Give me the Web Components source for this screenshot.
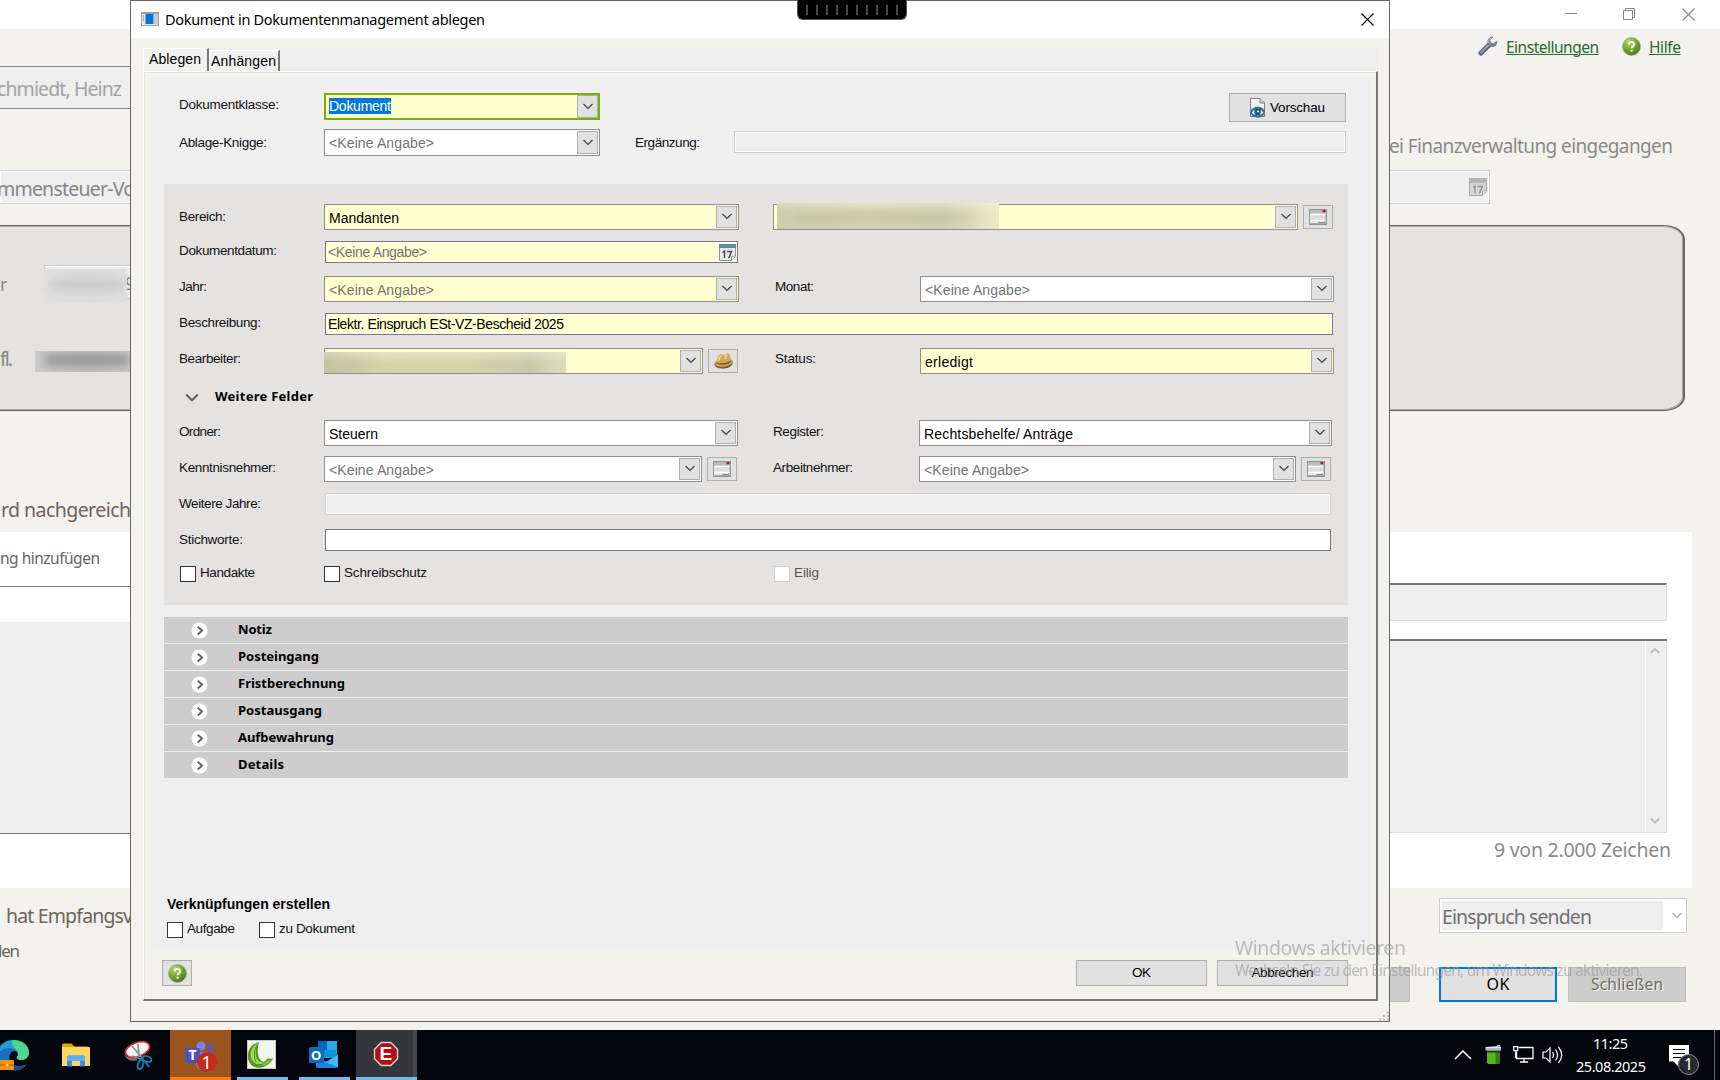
<!DOCTYPE html>
<html lang="de">
<head>
<meta charset="utf-8">
<title>Dokument in Dokumentenmanagement ablegen</title>
<style>
html,body{margin:0;width:1720px;height:1080px;overflow:hidden;background:#f3f2ee}
</style>
</head>
<body>
<desktop-screen></desktop-screen>
<script>
const define = (name, css, html, ready) => customElements.define(name, class extends HTMLElement {
  constructor() {
    super();
    this.attachShadow({mode: 'open'}).innerHTML = `<style>:host{display:block;box-sizing:border-box}${css}</style>` + (typeof html === 'function' ? html(this) : html);
  }
  connectedCallback() { if (ready) ready(this); }
});

/* ---------- icons ---------- */
const svg = (w, h, body, vb) => `<svg width="${w}" height="${h}" viewBox="${vb || `0 0 ${w} ${h}`}" style="display:block">${body}</svg>`;
const ICONS = {
  app: svg(18, 14, '<rect width="18" height="14" fill="#9aa0a6"/><rect x="1" y="2" width="16" height="11" fill="#e4e6e8"/><rect x="4.500" y="2" width="8" height="10" fill="#0078d7"/><path d="M2 4h1M2 6h1M2 8h1" stroke="#777"/><rect x="13" y="2" width="4" height="10" fill="#c9cbcd"/>'),
  close: svg(13, 13, '<path d="M.5.500l12 12M12.500.500l-12 12" stroke="#000" stroke-width="1.100"/>'),
  closeGray: svg(13, 13, '<path d="M.5.500l12 12M12.500.500l-12 12" stroke="#8a8a8a" stroke-width="1.100"/>'),
  min: svg(13, 2, '<path d="M0 .5h12" stroke="#8a8a8a"/>'),
  restore: svg(13, 13, '<path d="M.5 2.500h9v9h-9zM2.500 2.500v-2h9v9h-2" fill="none" stroke="#8a8a8a"/>'),
  wrench: svg(20, 20, '<path d="M3 17L11 9" stroke="#59617a" stroke-width="5" stroke-linecap="round"/><path d="M3 16.500L11 8.500" stroke="#9aa2b8" stroke-width="2.200" stroke-linecap="round"/><path d="M15.500.8c-3-.6-6 1.600-6 5 0 3.300 2.400 5.200 5 5.200 2.800 0 4.800-2.200 4.800-5l-.6-1.200-3.400 2.600-2.500-.8-.5-2.400z" fill="#767e96"/><path d="M13 2.200c-2 .9-2.800 3-2.200 5" fill="none" stroke="#b3bacb"/>'),
  help: svg(19, 19, '<defs><radialGradient id="g" cx=".35" cy=".25" r=".8"><stop offset="0" stop-color="#b5dd6b"/><stop offset=".5" stop-color="#74ac2e"/><stop offset="1" stop-color="#47761a"/></radialGradient></defs><circle cx="9.500" cy="9.500" r="9" fill="url(#g)" stroke="#9aa68b" stroke-width=".7"/><path d="M6.900 7.400c.2-3.300 5.600-3 5.300 0-.2 1.800-2.500 1.900-2.600 3.900" fill="none" stroke="#fff" stroke-width="1.900"/><rect x="8.600" y="12.700" width="2" height="2" fill="#fff"/>'),
  cal: svg(17, 17, '<path d="M.5.500h16v12l-4 4h-12z" fill="#e9ebec" stroke="#8b9298"/><rect width="17" height="4" fill="#5d8aa8"/><path d="M16.500 12l-4 .5v4" fill="#fff" stroke="#8b9298"/><path d="M3.500 8.500l2-1.500v7M8 7.600h4.500L9.800 14" fill="none" stroke="#4b4b40" stroke-width="1.500"/>'),
  calGray: svg(18, 18, '<path d="M.5.500h17v13l-4 4h-13z" fill="#d7d7d7" stroke="#a8a8a8"/><rect width="18" height="5" fill="#b4b4b4"/><path d="M17.500 12.500l-4 .5v4.500" fill="#eee" stroke="#a8a8a8"/><path d="M4 9.500l2-1.500v7.500M8.500 8.600h4.800l-3 7" fill="none" stroke="#979797" stroke-width="1.500"/>'),
  card: svg(18, 16, '<rect x=".5" y=".5" width="17" height="15" fill="#e9e9e9" stroke="#8e9292"/><rect x="1" y="1" width="16" height="3.500" fill="#b9bcbc"/><rect x="13.500" y="1" width="3" height="2.300" fill="#c8102e"/><rect x="2" y="6.500" width="14" height="3.500" fill="#dcdcdc"/><path d="M1 5.500h16M1.500 11.500h15" stroke="#fff"/><path d="M9.500 13.500h6v-1" stroke="#858989" fill="none"/><path d="M1.500 14.600h15.500v-10" stroke="#a0a4a4" fill="none"/>'),
  hat: svg(19, 16, '<path d="M.3 11c.2 5.500 15.400 7 18.300-.5.500-2-.6-3-2-2.700L2 9z" fill="#7c5823"/><path d="M.3 10.700c.2-2 2-3 3.200-3.200L16 6.500c2-.2 3.200.7 2.600 2.700-2.400 5-15 7.200-18.300 1.500z" fill="#c99d52"/><path d="M2.800 10C2.600 6 4.300 1.300 7 .9c1.300-.2 2 1.300 3 1S12.300-.2 14 .2c2.200.8 2.700 5 3 8C14.500 11.500 6.500 12.500 2.800 10z" fill="#cfa65b"/><path d="M2.800 9.400c3 2 10.600 1 14.100-2v1.300c-3.200 3-10.700 3.800-14.100 1.600z" fill="#6d4a1a"/><path d="M7.200 2.300C5.400 4 4.900 5.700 4.800 7.800M13 1.700c-1.600.8-2 2.500-1.700 4.500" fill="none" stroke="#f0d79b" stroke-width="1.800"/>'),
  preview: svg(15, 20, '<path d="M.5.500h9.500l4.500 4.500v13.500H.5z" fill="#f4f4f4" stroke="#7d7d7d"/><path d="M10 .5V5h4.500" fill="#c9c9c9" stroke="#8a8a8a"/><path d="M.3 14C1.500 7.500 13.500 6.500 14.900 14c-1 7.500-13.600 7.500-14.600 0z" fill="#2f7396"/><path d="M2 14.500c1.500-3.700 9.500-4.200 11.300 0-2 3.700-9.500 3.700-11.300 0z" fill="#e6f3f9"/><circle cx="7.600" cy="14" r="3.200" fill="#17567c"/><circle cx="8" cy="13.500" r="1.100" fill="#fff"/>'),
  chev: svg(10, 7, '<path d="M.5 1L5 5.500 9.500 1" fill="none" stroke="#3c3c3c" stroke-width="1.100"/>'),
  chevGray: svg(10, 7, '<path d="M.5 1L5 5.500 9.500 1" fill="none" stroke="#a5a5a5" stroke-width="1.100"/>'),
  chevBold: svg(14, 9, '<path d="M1.200 1.500L7 7.200l5.800-5.700" fill="none" stroke="#666" stroke-width="2.200"/>'),
  sbUp: svg(10, 8, '<path d="M.8 6L5 2l4.200 4" fill="none" stroke="#c0c0c0" stroke-width="2"/>'),
  sbDown: svg(10, 8, '<path d="M.8 1.500L5 5.500l4.200-4" fill="none" stroke="#c0c0c0" stroke-width="2"/>'),
  expand: svg(17, 17, '<circle cx="8.500" cy="8.500" r="8" fill="#fff"/><path d="M6.800 4.800l4.200 3.800-4.200 3.800" fill="none" stroke="#666" stroke-width="2"/>'),
  grip: svg(10, 10, '<path d="M8 1.500h2M4 5h2M8 5h2M0 8.500h2M4 8.500h2M8 8.500h2" stroke="#b8b8b8" stroke-width="2"/>'),
  edge: svg(32, 32, '<path d="M-1 14C1 5 8 1 15.500 1 25 1 31 7 31 13.500c0 5-4 7.500-8 7.500-3 0-5-1.500-4-3 2-3 .5-7-4.500-7.500C8 10 3 11-1 14z" fill="#1f9fd6"/><path d="M15 1c10 0 16 6 16 12.500 0 5-4 7.500-8 7.500-3 0-5-1.500-4-3 2-3 1-6-1-7.500C14 6 12 3 15 1z" fill="#4fd68f"/><path d="M-1 17C3 7 15 7 19.500 13c-5-3-9 2-8 7 1 7 10 9 17 5-3 5-8 6.500-12 6.500C8 31.500-1 25-1 17z" fill="#1a6fc4"/><path d="M11.500 20c1 7 10 9 17 5-4 5-9 6.500-14 6z" fill="#124d91"/><rect y="21" width="16" height="10" rx="1" fill="#f0950c"/><path d="M0 26h16" stroke="#a65c00"/><circle cx="9" cy="26" r="1.500" fill="#ffd04d"/>'),
  folder: svg(28, 24, '<path d="M0 2q0-1.500 1.500-1.500h8l3 3H25q2 0 2 2V22q0 1-1 1H0z" fill="#e8a200"/><rect y="4" width="28" height="19" rx="1" fill="#ffd562"/><path d="M5 23.500V14q0-1.500 1.500-1.500h15Q23 12.500 23 14v9.500h-5V18h-8v5.500z" fill="#3d8fe0"/><path d="M5 18V14q0-1.500 1.500-1.500h15Q23 12.500 23 14v4" fill="#62aef0"/>'),
  snip: svg(28, 30, '<path d="M.5 14q5 4 10 1l3 4q-9 3-13-5z" fill="#777"/><ellipse cx="13.500" cy="8.500" rx="12.500" ry="7" fill="#f4f4f4" stroke="#d22b2b" stroke-width="1.600" transform="rotate(-20 13.500 8.500)"/><path d="M8 5l11 13M14 3l1 13" stroke="#909090" stroke-width="1.800"/><path d="M17 18l-9-3" stroke="#888" stroke-width="1.800"/><ellipse cx="23" cy="18" rx="4.500" ry="2.700" fill="none" stroke="#1677b8" stroke-width="2" transform="rotate(15 23 18)"/><ellipse cx="16.500" cy="23.500" rx="2.500" ry="4.800" fill="none" stroke="#1677b8" stroke-width="2" transform="rotate(18 16.500 23.500)"/><path d="M21 20l4 6" stroke="#1677b8" stroke-width="2"/>'),
  teams: svg(34, 32, '<circle cx="16" cy="5" r="4.500" fill="#7b83eb"/><circle cx="25" cy="6" r="3.200" fill="#5059c9"/><path d="M11 11h13v11a6.500 7 0 0 1-13 0z" fill="#7b83eb"/><path d="M22 11h7v8a5 5 0 0 1-7 4z" fill="#5059c9"/><rect x="0" y="7" width="15" height="15" rx="1.500" fill="#4b53bc"/><circle cx="22" cy="21" r="10" fill="#c42b1c"/>'),
  swoosh: svg(29, 29, '<rect width="29" height="29" fill="#f3f3f0"/><path d="M.5 29V.5H29M28.500 0v28.500H0" fill="none" stroke="#c9c9c9"/><path d="M12 2C4 4 0 11 1 18c1 6 5 10 11 9.800 7-.2 12-5 14-9.800-2 1-4 1-6 .5-1 3-3.500 4-5.500 2.500C11 18 9.500 12 12 2z" fill="#4e951e"/><path d="M11 3C5 6 2.500 12 4 18c1.500 5.500 8 8 14 4.500-5 .5-8-2-9-6.500-.9-4.500 0-9 2-13z" fill="#a4d750"/><path d="M19.500 20c2 .5 4 .3 5.500-.7-2.500 4-7 7-12 7 3-1 5.500-3 6.500-6.300z" fill="#86c43a"/><path d="M10 5C7 10 6.500 17 9 22" fill="none" stroke="#3f7f18" stroke-width=".8"/>'),
  outlook: svg(30, 28, '<rect x="9" y="0" width="19" height="17" fill="#1490df"/><path d="M18 0h10v9H18z" fill="#28a8ea"/><path d="M9 0h9v9H9z" fill="#0364b8"/><path d="M7 14l11 7 11-8v12q0 2-2 2H9q-2 0-2-2z" fill="#1a86d9"/><path d="M29 14v12L16 21z" fill="#50d0ff" opacity=".7"/><rect y="6" width="15" height="16" rx="1.500" fill="#0f6cbd"/>'),
  octagon: svg(26, 26, '<path d="M8 .800h10L25.200 8v10L18 25.200H8L.800 18V8z" fill="#d5d5d5"/><path d="M8.500 2.200h9L23.800 8.500v9l-6.300 6.300h-9L2.200 17.500v-9z" fill="#b50d16"/>'),
  up: svg(18, 10, '<path d="M1 9l8-8 8 8" fill="none" stroke="#fff" stroke-width="1.500"/>'),
  battery: svg(17, 20, '<path d="M2 4h13v14l-1.500 1h-10L2 18z" fill="#57b51d"/><path d="M10.500 7H15v11l-1.500 1h-3z" fill="#2e8313"/><path d="M2 5.500h13v2H2z" fill="#1f3c12"/><path d="M.5 2L12 1l.5-1H15v1l1 1v3.500H.5z" fill="#b4bac8"/><path d="M1 2.500h14" stroke="#e3e6ee"/>'),
  net: svg(21, 17, '<path d="M5.500 1.500h14.500v11H3.500V6M11 12.500V16M7 16h8" fill="none" stroke="#fff" stroke-width="1.300"/><path d="M.7.700h4v4h-4zM2.700 5v7" fill="none" stroke="#fff" stroke-width="1.200"/>'),
  sound: svg(21, 18, '<path d="M1 6h3l4-4v14l-4-4H1z" fill="none" stroke="#fff" stroke-width="1.200"/><path d="M10.500 6q2 3 0 6M13.500 3.500q4 5.500 0 11M16.500 1q6.500 8 0 16" fill="none" stroke="#fff" stroke-width="1.200"/>'),
  note: svg(32, 32, '<path d="M0 0h20v16.500H9V21l-4.500-4.500H0z" fill="#fff"/><path d="M4 4.500h12M4 8.500h12M4 12.500h9" stroke="#000" stroke-width="1.200"/><circle cx="19.500" cy="19.500" r="10" fill="#28292c" stroke="#8d8d8d"/>'),
};
define('ui-icon', ':host{flex:none}', el => ICONS[el.getAttribute('name')] || '');

/* ---------- text whose tracking is set so that it fills its width ---------- */
const FONTS = {
  l: ['"Liberation Sans",Arial,sans-serif', .3465],
  n: ['"Noto Sans","Open Sans",sans-serif', .388],
};
define('ui-text', ':host{white-space:nowrap;line-height:20px;height:20px;flex:none}span{display:inline-block}:host([link]) span{text-decoration:underline;text-underline-offset:1px;text-decoration-thickness:1px}', '<span><slot></slot></span>', el => {
  const w = +el.getAttribute('w'), span = el.shadowRoot.querySelector('span');
  el.style.font = `${el.getAttribute('weight') || 400} ${el.getAttribute('size') || 14}px/20px ${FONTS[el.getAttribute('face') || 'l'][0]}`;
  el.style.color = el.getAttribute('color') || '#111';
  if (!w) return;
  el.style.width = w + 'px';
  const n = el.textContent.length - 1, natural = span.getBoundingClientRect().width;
  if (n > 0) span.style.letterSpacing = ((w - natural) / n).toFixed(3) + 'px';
});

/* ---------- layout ---------- */
define('ui-stack', ':host{display:flex;flex-direction:column;align-items:flex-start}', '<slot></slot>');
define('ui-band', ':host{display:flex;align-items:flex-start;flex:none}', '<slot></slot>');
define('ui-cell', ':host{flex:none;display:flow-root}', '<slot></slot>');

/* ---------- controls ---------- */
define('combo-box', `:host{display:flex;border:1px solid #8f8f8f;padding:1px;background:#fff;height:26px}
:host([kind=req]){background:#ffffcf}
:host([kind=focus]){background:#ffffcf;border:2px solid #7ab000;padding:0}
.t{flex:1;padding:2px 0 0 3px;min-width:0}
:host([kind=focus]) .t{padding-top:1px}
.b{width:21px;box-sizing:border-box;border:1px solid #adadad;background:#e1e1e1;display:flex;justify-content:center;align-items:center}
.b svg{margin-bottom:1px}
:host([kind=focus]) .t ::slotted(*){background:linear-gradient(#0078d7,#0078d7) 0 2px/100% 16px no-repeat}`, `<div class="t"><slot></slot></div><div class="b">${ICONS.chev}</div>`);
define('text-field', `:host{display:flex;border:1px solid #7a7a7a;padding:1px;background:#fff;height:22px}
.t{flex:1;display:flex;justify-content:space-between;background:#fff;padding:0 0 0 1px;height:18px}
:host([kind=req]) .t{background:#ffffcf}
:host([kind=off]){border-color:#ccc}
:host([kind=off]) .t{background:#efefef}
::slotted(ui-text){margin-top:-1px}`, '<div class="t"><slot></slot></div>');
define('push-button', `:host{display:flex;align-items:center;justify-content:center;border:1px solid #adadad;background:#e1e1e1}`, '<slot></slot>');
define('check-box', `:host{width:16px;height:16px;border:1px solid #333;background:#fff}:host([off]){border-color:#ccc}`, '');
define('section-bar', `:host{display:flex;width:1184px;height:26px;background:#cdcdcd;margin-bottom:1px;padding:5px 0 0 27px}
ui-text{margin:-3px 0 0 30px}`, el => `<ui-icon name="expand"></ui-icon><ui-text face="n" weight="700" size="13" w="${el.getAttribute('w')}" color="#000">${el.getAttribute('label')}</ui-text>`);
define('blur-patch', `:host{overflow:hidden;background:var(--c)}i{display:block;height:8px;margin:11px 24px 0 18px;filter:blur(5px);background:var(--i);opacity:.28}`, '<i></i>');
define('session-tab', `:host{display:flex;justify-content:space-between;width:110px;height:20px;background:#000;border-radius:0 0 6px 6px;padding:5px 8px 0;border:1px solid #555;border-top:0}
b{width:2px;height:10px;background:#4a4a4a}`, '<b></b>'.repeat(10));

/* cell descriptors: x/y are measured on the screen, bands turn them into gaps */
const cell = (x, y, w, html) => ({x, y, w, html});
const text = (x, base, w, str, o = {}) => {
  const size = o.size || 13.5, face = o.face || 'l';
  return cell(x, Math.round(base - 10 - FONTS[face][1] * (o.size || 14)) + (size > 19 ? 1 : 0), w,
    `<ui-text w="${w}" size="${size}" face="${face}" weight="${o.weight || 400}" color="${o.color || '#111'}" ${o.link ? 'link' : ''}>${str}</ui-text>`);
};
const label = (base, w, str) => text(179, base, w + 1, str);
const box = (x, y, w, h, css, inner = '') => cell(x, y, w, `<ui-cell style="height:${h}px;${css}">${inner}</ui-cell>`);
const icon = (x, y, name) => cell(x, y, 0, `<ui-icon name="${name}"></ui-icon>`);
const none = '&lt;Keine Angabe&gt;';
const inner = (w, str, color = '#000') => w ? `<ui-text w="${w}" color="${color}">${str}</ui-text>` : '';
const combo = (x, y, w, kind, tw, str, color, h = 26) => cell(x, y, w, `<combo-box kind="${kind}" style="height:${h}px">${inner(tw, str, color)}</combo-box>`);
const field = (x, y, w, kind, body = '') => cell(x, y, w, `<text-field kind="${kind}">${body}</text-field>`);
const button = (x, y, w, h, body, css = '') => cell(x, y, w, `<push-button style="height:${h}px;${css}">${body}</push-button>`);
const check = (x, y, off) => cell(x, y, 16, `<check-box ${off ? 'off' : ''}></check-box>`);
const band = (y, h, items, x = 0, w = 0, css = '') => {
  let cur = x;
  const cells = items.map(i => {
    const m = `margin:${i.y - y}px 0 0 ${i.x - cur}px`;
    cur = i.x + i.w;
    return `<ui-cell style="width:${i.w}px;${m}">${i.html}</ui-cell>`;
  }).join('');
  return {x, y, h, html: m => `<ui-band style="height:${h}px;${w ? `width:${w}px;` : ''}${m};${css}">${cells}</ui-band>`};
};
const stack = (x, y, bands) => {
  let cur = y;
  return '<ui-stack>' + bands.map(b => {
    const s = b.html(`margin:${b.y - cur}px 0 0 ${b.x - x}px`);
    cur = b.y + b.h;
    return s;
  }).join('') + '</ui-stack>';
};
const raw = (x, y, h, html) => ({x, y, h, html: m => `<ui-cell style="height:${h}px;${m}">${html}</ui-cell>`});
const seg = (size, color, link) => ({face: 'n', size, color, link});
const gray = '#747474';

/* ---------- application window behind the dialog ---------- */
define('tax-window', ':host{width:1720px;height:1030px;background:#f3f2ee;overflow:hidden}', stack(0, 0, [
  band(0, 29, [icon(1565, 13, 'min'), icon(1623, 8, 'restore'), icon(1682, 8, 'closeGray')], 0, 1720, 'background:#fff'),
  band(29, 37, [icon(1478, 36, 'wrench'),
    text(1506, 53, 93, 'Einstellungen', seg(15.5, '#2a6a2a', 1)),
    icon(1622, 37, 'help'),
    text(1649, 53, 32, 'Hilfe', seg(15.5, '#2a6a2a', 1))]),
  band(66, 43, [text(-3, 95, 125, 'chmiedt, Heinz', seg(19.5, '#a2a2a2'))], 0, 200, 'background:#efefef;border-top:1px solid #888;border-bottom:1px solid #888;box-sizing:border-box'),
  band(109, 61, [text(1389, 153, 284, 'ei Finanzverwaltung eingegangen', seg(19, '#8a8a8a'))]),
  band(170, 34, [box(0, 170, 200, 34, 'background:#efefef;border:1px solid #ccc;border-left:0;box-shadow:inset 0 0 0 1px #fff'),
    text(-3, 196, 138, 'mmensteuer-Vo', seg(19.5, '#858585')),
    box(1300, 170, 190, 34, 'background:#efefef;border:1px solid #ccc;box-shadow:inset 0 0 0 1px #fff'),
    icon(1469, 178, 'calGray')]),
  band(225, 186, [
    text(0, 290, 6, 'r', seg(18, '#8a8a8a')),
    box(44, 264, 90, 34, 'background:#ebebeb;border:1px solid #ccc;box-shadow:inset 0 1px #fff'),
    text(125, 289, 9, '9', seg(18, '#777')),
    box(43, 268, 84, 33, 'background:linear-gradient(90deg,#e2e2e1,#dcdcdc 40%,#e0e0e0)'),
    box(50, 278, 74, 11, 'background:#b4b4b4;filter:blur(5px);opacity:.5'),
    text(0, 365, 13, 'fl.', seg(19.5, '#8a8a8a')),
    box(35, 350, 97, 21, 'background:linear-gradient(90deg,#cacaca,#bdbdbd 50%,#c4c4c4);overflow:hidden', '<ui-cell style="height:10px;margin:4px 4px 0 10px;background:#777;filter:blur(4px);opacity:.6"></ui-cell>')
  ], 0, 1685, 'box-sizing:border-box;background:#e4e3e1;border:solid #666;border-width:1px 2px 1px 0;border-radius:0 22px 22px 0/0 14px 14px 0;box-shadow:inset -1px -1px #aaa,inset 0 1px #aaa'),
  band(490, 42, [text(1, 517, 130, 'rd nachgereich', seg(19.5, '#6b6658'))]),
  band(532, 356, [cell(0, 532, 200, stack(0, 532, [
      band(532, 54, [text(0, 564, 100, 'ng hinzufügen', seg(15.5, '#67645e'))]),
      raw(0, 586, 1, '<ui-cell style="width:200px;height:1px;background:#777a80"></ui-cell>'),
      raw(0, 622, 212, '<ui-cell style="width:200px;height:212px;background:#efefef;border-bottom:1px solid #777a80"></ui-cell>')])),
    cell(1380, 532, 312, stack(1380, 532, [
      raw(1380, 583, 38, '<ui-cell style="width:287px;height:38px;background:#efefef;border:1px solid #e0e0e0;border-top:2px solid #777"></ui-cell>'),
      band(639, 194, [box(1645, 641, 1, 191, 'background:#fff'), icon(1650, 647, 'sbUp'), icon(1650, 817, 'sbDown')], 1380, 287, 'box-sizing:border-box;background:#efefef;box-shadow:inset 0 2px #777,inset -1px -1px #e0e0e0'),
      band(833, 55, [text(1494, 857, 177, '9 von 2.000 Zeichen', seg(19.5, '#8a8a8a'))], 1380)]))
  ], 0, 1692, 'background:#fff'),
  band(888, 56, [text(6, 923, 127, 'hat Empfangsv', seg(19.5, '#6b6658')),
    box(1439, 898, 248, 35, 'border:1px solid #ccc;background:linear-gradient(#efefef,#efefef) 2px 2px/221px 29px no-repeat #fff'),
    text(1442, 924, 150, 'Einspruch senden', seg(19.5, '#707070')), icon(1672, 912, 'chevGray')]),
  band(944, 20, [text(-8, 958, 28, 'den', seg(17, '#6b6658'))]),
  band(967, 35, [button(1300, 967, 110, 35, '', 'background:#ccc;border-color:#bfbfbf'),
    button(1439, 967, 118, 35, '<ui-text face="n" size="16" w="23" color="#000" style="margin-top:-1px">OK</ui-text>', 'border:2px solid #0078d7'),
    button(1568, 967, 118, 35, '<ui-text face="n" size="15.5" w="72" color="#6f6a5d" style="margin-top:-2px;text-shadow:1px 1px #fff">Schließen</ui-text>', 'background:#ccc;border-color:#bfbfbf')])
]));

/* ---------- filing dialog ---------- */
const page = stack(144, 72, [
  band(93, 30, [label(110, 99, 'Dokumentklasse:'), combo(324, 93, 276, 'focus', 62, 'Dokument', '#fff', 27),
    button(1229, 93, 117, 29, '<ui-icon name="preview" style="margin-right:5px"></ui-icon><ui-text size="13.5" w="55" color="#000">Vorschau</ui-text>')], 144),
  band(129, 27, [label(148, 87, 'Ablage-Knigge:'), combo(324, 129, 276, 'plain', 105, none, gray, 27),
    text(635, 148, 65, 'Ergänzung:'), field(734, 131, 612, 'off')], 144),
  {x: 164, y: 184, h: 421, html: m => `<ui-cell style="width:1184px;height:421px;background:#e4e3e1;${m}">` + stack(164, 184, [
    band(204, 26, [label(222, 46, 'Bereich:'), combo(324, 204, 415, 'req', 70, 'Mandanten'),
      combo(773, 204, 525, 'req'),
      cell(777, 203, 222, '<blur-patch style="height:26px;--c:linear-gradient(rgba(255,255,255,.3),transparent 40%),linear-gradient(90deg,#cccdab,#d4d5ae 40%,#cfd0ae 75%,#ebebc3);--i:#a5a780"></blur-patch>'),
      button(1303, 205, 30, 24, '<ui-icon name="card"></ui-icon>')], 164),
    band(241, 22, [label(256, 97, 'Dokumentdatum:'), field(325, 241, 413, 'req', inner(99, none, gray) + '<ui-icon name="cal" style="margin:1px 0 0 0"></ui-icon>')], 164),
    band(276, 26, [label(292, 27, 'Jahr:'), combo(324, 276, 415, 'req', 105, none, gray), text(775, 292, 39, 'Monat:'), combo(920, 276, 414, 'plain', 105, none, gray)], 164),
    band(313, 22, [label(328, 81, 'Beschreibung:'), field(325, 313, 1008, 'req', inner(236, 'Elektr. Einspruch ESt-VZ-Bescheid 2025'))], 164),
    band(348, 26, [label(364, 61, 'Bearbeiter:'), combo(324, 348, 379, 'req'),
      cell(324, 352, 242, '<blur-patch style="height:21px;--c:linear-gradient(rgba(255,255,255,.3),transparent 45%),linear-gradient(90deg,#c3c4a0,#d8d9ae 25%,#d9daaf 60%,#cccdb0 85%,#dcddb9);--i:#b4b688"></blur-patch>'),
      button(708, 349, 30, 24, '<ui-icon name="hat"></ui-icon>'), text(775, 364, 41, 'Status:'), combo(920, 348, 414, 'req', 48, 'erledigt')], 164),
    band(385, 24, [icon(185, 393, 'chevBold'), text(215, 401, 98, 'Weitere Felder', {face: 'n', weight: 700, size: 13, color: '#000'})], 164),
    band(420, 26, [label(437, 41, 'Ordner:'), combo(324, 420, 414, 'plain', 49, 'Steuern'), text(773, 437, 51, 'Register:'), combo(919, 420, 413, 'plain', 149, 'Rechtsbehelfe/ Anträge')], 164),
    band(456, 26, [label(473, 96, 'Kenntnisnehmer:'), combo(324, 456, 378, 'plain', 105, none, gray), button(707, 457, 30, 24, '<ui-icon name="card"></ui-icon>'),
      text(773, 473, 80, 'Arbeitnehmer:'), combo(919, 456, 377, 'plain', 105, none, gray), button(1301, 457, 30, 24, '<ui-icon name="card"></ui-icon>')], 164),
    band(493, 22, [label(509, 81, 'Weitere Jahre:'), field(325, 493, 1006, 'off')], 164),
    band(529, 22, [label(545, 63, 'Stichworte:'), field(325, 529, 1006, 'plain')], 164),
    band(566, 16, [check(180, 566), text(200, 578, 55, 'Handakte'), check(324, 566), text(344, 578, 83, 'Schreibschutz'), check(774, 566, 1), text(794, 578, 25, 'Eilig', {color: '#555'})], 164),
  ]) + '</ui-cell>'},
  raw(164, 617, 162, [['Notiz', 34], ['Posteingang', 81], ['Fristberechnung', 107], ['Postausgang', 84], ['Aufbewahrung', 96], ['Details', 46]]
    .map(([l, w]) => `<section-bar label="${l}" w="${w}"></section-bar>`).join('')),
  band(894, 20, [text(167, 909, 163, 'Verknüpfungen erstellen', {weight: 700, size: 14, color: '#000'})], 144),
  band(922, 16, [check(167, 922), text(187, 934, 48, 'Aufgabe'), check(259, 922), text(279, 934, 76, 'zu Dokument')], 144),
  band(960, 26, [button(162, 960, 30, 26, '<ui-icon name="help"></ui-icon>'),
    button(1076, 960, 131, 26, '<ui-text size="13.5" w="19" color="#000" style="margin-top:-1px">OK</ui-text>'),
    button(1217, 960, 131, 26, '<ui-text size="13.5" w="62" color="#000" style="margin-top:-1px">Abbrechen</ui-text>')], 144)
]);
define('filing-dialog', `:host{position:absolute;left:130px;top:0;width:1260px;height:1022px;border:1px solid #666;background:#f3f2ee}
header{display:flex;height:37px;background:#fff;padding:0 0 0 10px;align-items:flex-start}
header .x{margin:12px 15px 0 auto}
.tabs{display:flex;margin:10px 0 0 12px;width:1235px;height:23px;background:#efefef;align-items:flex-end}
.tab{box-sizing:border-box;border:1px solid #fff;border-bottom:0;border-right:2px solid #777;background:#f1f1f0}
.a{width:66px;height:23px;padding:0 0 0 5px}.b{width:71px;height:21px;padding:0 0 0 1px}
.page{box-sizing:border-box;margin-left:12px;width:1235px;height:930px;border:1px solid #fff;border-right:2px solid #777;border-bottom:2px solid #777;background:linear-gradient(#efefef,#efefef) 7px 6px/1220px 873px no-repeat #f3f2ee;box-shadow:inset 1px 1px #e2e2e0}
.g{margin:10px 0 0 1248px}`,
`<header><ui-icon name="app" style="margin-top:11px"></ui-icon><ui-text face="n" size="14.5" w="320" color="#000" style="margin:8px 0 0 6px">Dokument in Dokumentenmanagement ablegen</ui-text><ui-icon class="x" name="close"></ui-icon></header>
<div class="tabs"><div class="tab a"><ui-text w="52" color="#000">Ablegen</ui-text></div><div class="tab b"><ui-text w="65" color="#000">Anhängen</ui-text></div></div>
<div class="page">${page}</div><ui-icon class="g" name="grip"></ui-icon>`);

/* ---------- taskbar ---------- */
const glyph = (name, css, marks = '') => `<ui-cell style="position:relative;${css}"><ui-icon name="${name}"></ui-icon>${marks}</ui-cell>`;
const mark = (ch, x, y, size, weight = 700, face = 'n') => `<ui-text face="${face}" color="#fff" size="${size}" weight="${weight}" style="position:absolute;left:${x}px;top:${y}px">${ch}</ui-text>`;
const W = s => seg(s, '#fff');
define('task-bar', ':host{display:flex;width:1720px;height:50px;background:#02050a;overflow:hidden}', stack(0, 1030, [band(1030, 50, [
  icon(-2, 1039, 'edge'), icon(62, 1043, 'folder'), icon(124, 1041, 'snip'),
  box(170, 1030, 61, 50, 'background:#9b541e;border-bottom:3px solid #ff7a0a', glyph('teams', 'margin:11px 0 0 15px', mark('T', 3.5, 4, 14) + mark('1', 16.5, 11, 18, 400))),
  box(237, 1030, 51, 50, 'border-bottom:3px solid #76b9ed', glyph('swoosh', 'margin:10px 0 0 10px')),
  box(299, 1030, 51, 50, 'border-bottom:3px solid #76b9ed', glyph('outlook', 'margin:11px 0 0 10px', mark('O', 2, 4, 13))),
  box(356, 1030, 61, 50, 'background:linear-gradient(90deg,#35363a 56px,#23272b 56px,#45484b 57px);border-bottom:3px solid #76b9ed', glyph('octagon', 'margin:11px 0 0 17px', mark('E', 6.5, 3, 19, 700, 'l'))),
  icon(1454, 1050, 'up'), icon(1485, 1045, 'battery'), icon(1513, 1046, 'net'), icon(1542, 1046, 'sound'),
  text(1593, 1049, 35, '11:25', W(14.5)), text(1576, 1072, 70, '25.08.2025', W(14.5)),
  cell(1669, 1045, 32, glyph('note', '', mark('1', 15, 9, 16, 400))),
  box(1714, 1030, 1, 50, 'background:#6b6d70')
], 0, 1720)]));

define('activation-note', ':host{position:absolute;left:1235px;top:938px;pointer-events:none;opacity:.62}',
`<ui-text face="n" size="19.5" w="171" color="#999">Windows aktivieren</ui-text><ui-text face="n" size="15.5" w="408" color="#999" style="margin-top:2px">Wechseln Sie zu den Einstellungen, um Windows zu aktivieren.</ui-text>`);

define('desktop-screen', ':host{position:relative;width:1720px;height:1080px;overflow:hidden}session-tab{position:absolute;left:797px;top:0}',
'<tax-window></tax-window><task-bar></task-bar><filing-dialog></filing-dialog><activation-note></activation-note><session-tab></session-tab>');
</script>
</body>
</html>
